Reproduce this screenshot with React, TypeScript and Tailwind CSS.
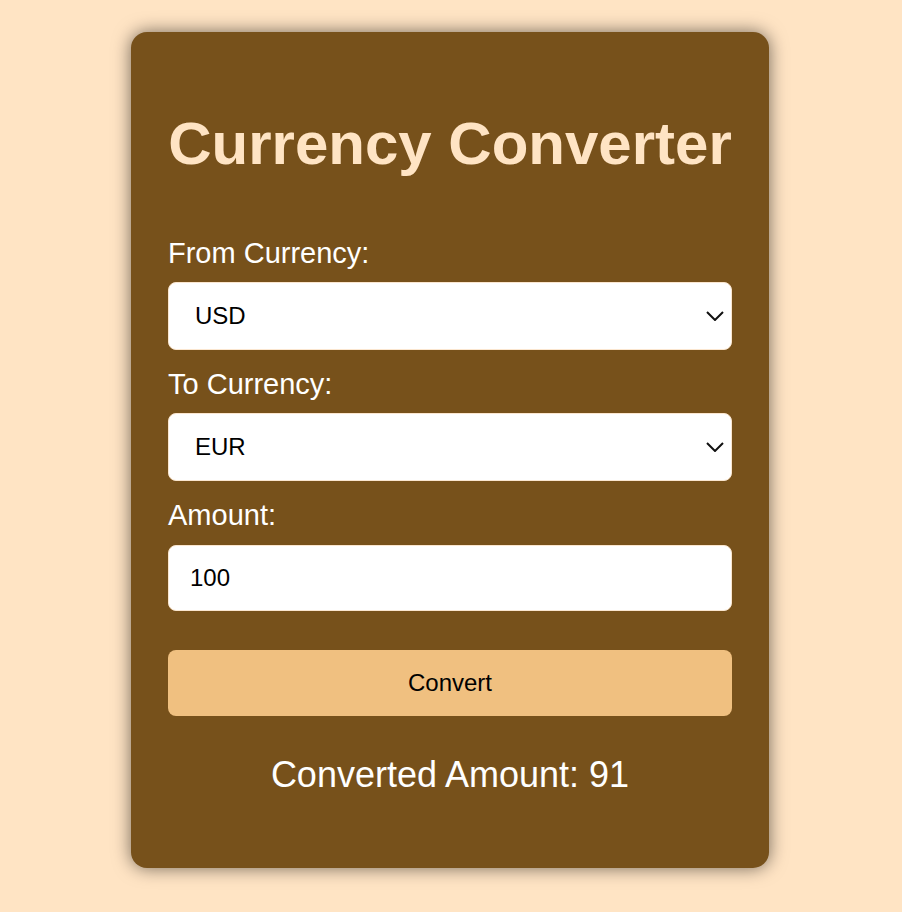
import { useState } from "react";

const rates: Record<string, number> = { USD: 1, EUR: 0.91, GBP: 0.79, JPY: 149.5, INR: 83.1 };

const Chevron = () => (
  <svg
    className="pointer-events-none absolute right-[8px] top-1/2 h-[10px] w-[18px] -translate-y-1/2"
    viewBox="0 0 18 10"
    fill="none"
    stroke="#111"
    strokeWidth={2}
  >
    <path d="M1 1l8 8 8-8" />
  </svg>
);

export default function App() {
  const [from, setFrom] = useState("USD");
  const [to, setTo] = useState("EUR");
  const [amount, setAmount] = useState("100");
  const [result, setResult] = useState(91);

  const convert = () => {
    const v = (parseFloat(amount) || 0) / rates[from] * rates[to];
    setResult(Math.round(v * 100) / 100);
  };

  // shared select styles
  const selectCls =
    "h-[68px] w-full appearance-none rounded-lg border border-[#fbe6cf] bg-white pl-[26px] text-[24px] text-black outline-none";

  return (
    <div className="min-h-screen bg-[#ffe4c4] pt-[32px] pb-[44px] font-['Liberation_Sans',Arial,sans-serif]">
      <div className="ml-[131px] w-[638px] rounded-2xl bg-[#77511b] px-[37px] pt-[77px] pb-[73px] shadow-[0_0_18px_rgba(0,0,0,0.55)]">
        <h1 className="text-center text-[60px] font-bold leading-[69px] text-[#ffe4c4]">
          Currency Converter
        </h1>

        <div className="mt-[59px] flex flex-col">
          <label className="mb-[12px] block text-[29px] leading-[33px] text-white">From Currency:</label>
          <div className="relative mb-[18px]">
            <select className={selectCls} value={from} onChange={(e) => setFrom(e.target.value)}>
              {Object.keys(rates).map((c) => (
                <option key={c}>{c}</option>
              ))}
            </select>
            <Chevron />
          </div>

          <label className="mb-[12px] block text-[29px] leading-[33px] text-white">To Currency:</label>
          <div className="relative mb-[18px]">
            <select className={selectCls} value={to} onChange={(e) => setTo(e.target.value)}>
              {Object.keys(rates).map((c) => (
                <option key={c}>{c}</option>
              ))}
            </select>
            <Chevron />
          </div>

          <label className="mb-[13px] block text-[29px] leading-[33px] text-white">Amount:</label>
          <input
            type="number"
            value={amount}
            onChange={(e) => setAmount(e.target.value)}
            className="h-[66px] w-full rounded-lg border border-[#fbe6cf] bg-white px-[21px] text-[24px] text-black outline-none"
          />

          <button
            onClick={convert}
            className="mt-[39px] h-[66px] w-full rounded-lg bg-[#f0c080] text-[24px] text-black"
          >
            Convert
          </button>
        </div>

        <p className="mt-[38px] text-center text-[36px] leading-[41px] text-white">
          Converted Amount: {result}
        </p>
      </div>
    </div>
  );
}
